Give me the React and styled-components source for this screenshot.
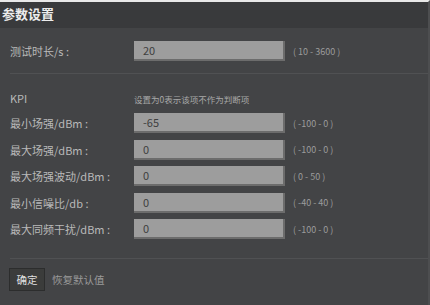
import React from 'react';
import styled, { createGlobalStyle } from 'styled-components';

const Global = createGlobalStyle`
  html, body {
    margin: 0;
    padding: 0;
    background: #434446;
  }
  body {
    font-family: "Noto Sans CJK SC", "Noto Sans", sans-serif;
  }
`;

const rows = [
  { label: '最小场强/dBm :', value: '-65', range: '( -100 - 0 )' },
  { label: '最大场强/dBm :', value: '0', range: '( -100 - 0 )' },
  { label: '最大场强波动/dBm :', value: '0', range: '( 0 - 50 )' },
  { label: '最小信噪比/db :', value: '0', range: '( -40 - 40 )' },
  { label: '最大同频干扰/dBm :', value: '0', range: '( -100 - 0 )' }
];

const App = () => (
  <Panel>
    <Global />
    <Header>参数设置</Header>
    <Section top={13}>
      <Row>
        <Label>测试时长/s :</Label>
        <Input defaultValue="20" />
        <Range>( 10 - 3600 )</Range>
      </Row>
    </Section>
    <Divider space={12} />
    <Section top={17}>
      <KpiRow>
        <Label>KPI</Label>
        <Hint>设置为0表示该项不作为判断项</Hint>
      </KpiRow>
      <List>
        {rows.map(r => (
          <Row key={r.label}>
            <Label>{r.label}</Label>
            <Input defaultValue={r.value} />
            <Range>{r.range}</Range>
          </Row>
        ))}
      </List>
    </Section>
    <Divider space={19} />
    <Footer>
      <Button>确定</Button>
      <Reset>恢复默认值</Reset>
    </Footer>
  </Panel>
);

const Panel = styled.div`
  width: 430px;
  height: 305px;
  box-sizing: border-box;
  border-top: 2px solid #e9e9e9;
  border-right: 2px solid #4d4e50;
  background: #434446;
  overflow: hidden;
`;
const Header = styled.div`
  height: 26px;
  background: #393a3c;
  color: #ececec;
  font-size: 13px;
  font-weight: bold;
  line-height: 24px;
  padding-left: 2px;
`;
const Section = styled.div`
  padding: ${props => props.top}px 0 0 10px;
`;
const List = styled.div`
  display: flex;
  flex-direction: column;
  gap: 6.5px;
  margin-top: 8px;
`;
const Row = styled.div`
  display: flex;
  align-items: center;
  height: 20px;
`;
const KpiRow = styled.div`
  display: flex;
  align-items: center;
  height: 14px;
`;
const Label = styled.span`
  width: 124px;
  flex: none;
  color: #b9b9b9;
  font-size: 11px;
`;
const Hint = styled.span`
  color: #a8a8a8;
  font-size: 8.5px;
  margin-top: 1px;
`;
const Input = styled.input`
  width: 151px;
  height: 20px;
  box-sizing: border-box;
  border: none;
  border-right: 2px solid #6c6c6c;
  border-bottom: 2px solid #6c6c6c;
  background: #9d9d9d;
  color: #404040;
  font-family: inherit;
  font-size: 11px;
  padding: 0 0 0 9px;
  outline: none;
`;
const Range = styled.span`
  margin-left: 8px;
  color: #9c9c9c;
  font-size: 9px;
`;
const Divider = styled.div`
  height: 1px;
  background: #505153;
  margin: ${props => props.space}px 0 0 10px;
`;
const Footer = styled.div`
  display: flex;
  align-items: center;
  gap: 7px;
  padding: 9px 0 0 9px;
`;
const Button = styled.button`
  width: 36px;
  height: 23px;
  box-sizing: border-box;
  background: #3b3c3b;
  border: 1px solid #2c2d2d;
  color: #e0e0e0;
  font-family: inherit;
  font-size: 10.5px;
  padding: 0;
`;
const Reset = styled.span`
  color: #9a9a9a;
  font-size: 10.5px;
`;

export default App;
